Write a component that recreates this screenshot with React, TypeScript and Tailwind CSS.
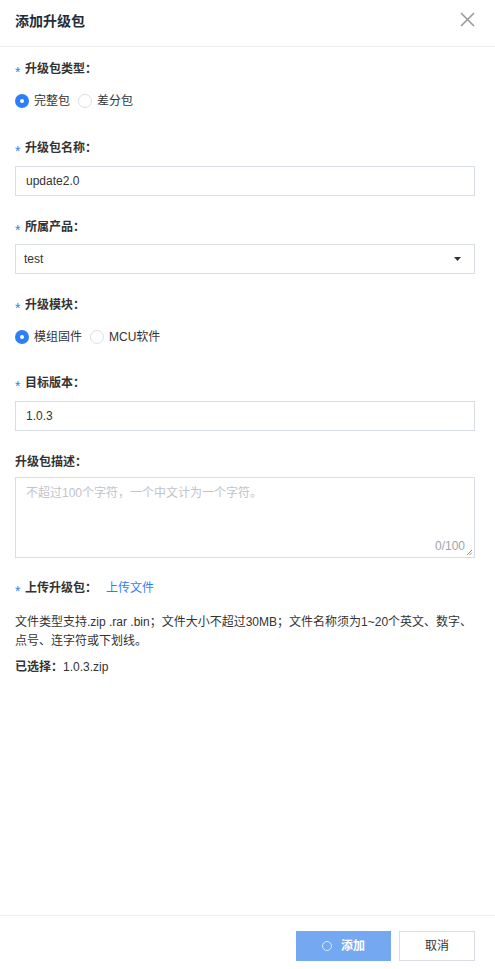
import { useState } from 'react';

const FONT = '"Liberation Sans", "Noto Sans CJK SC", Arial, sans-serif';

function Label({ text, required = true }: { text: string; required?: boolean }) {
  return (
    <div className="flex h-[18px] items-center text-[12px] font-bold leading-[18px] text-[#333]">
      {required && (
        <span className="mr-[4px] w-[6px] translate-y-[3px] text-[14px] font-normal leading-none text-[#2d7ff9]">*</span>
      )}
      <span>{text}</span>
    </div>
  );
}

function Radio({ checked, label }: { checked: boolean; label: string }) {
  return (
    <label className="mr-[8px] flex items-center text-[12px] text-[#333]">
      {checked ? (
        <span className="flex h-[14px] w-[14px] items-center justify-center rounded-full bg-[#2d7ff9]">
          <span className="h-[4px] w-[4px] rounded-full bg-white" />
        </span>
      ) : (
        <span className="h-[14px] w-[14px] rounded-full border border-[#dcdfe6] bg-white" />
      )}
      <span className="ml-[5px]">{label}</span>
    </label>
  );
}

function TextInput({ value }: { value: string }) {
  return (
    <div className="flex h-[30px] items-center border border-[#d8dde6] bg-white px-[10px] text-[12px] text-[#333]">
      {value}
    </div>
  );
}

export default function App() {
  const [desc] = useState('');

  return (
    <div className="flex h-[969px] w-[495px] flex-col bg-white" style={{ fontFamily: FONT }}>
      {/* Header */}
      <div className="flex h-[47px] shrink-0 items-start justify-between border-b border-[#ebedf0] pl-[15px] pr-[20px] pt-[12px]">
        <h1 className="text-[14px] font-bold leading-[18px] text-[#1f2d3d]">添加升级包</h1>
        <svg width="15" height="15" viewBox="0 0 15 15">
          <path d="M1 1 L14 14 M14 1 L1 14" stroke="#9a9a9a" strokeWidth="1.6" />
        </svg>
      </div>

      {/* Form */}
      <div className="flex-1 pl-[15px] pr-[20px] pt-[13px]">
        <Label text="升级包类型：" />
        <div className="mt-[13px] flex h-[20px] items-center">
          <Radio checked label="完整包" />
          <Radio checked={false} label="差分包" />
        </div>

        <div className="mt-[28px]">
          <Label text="升级包名称：" />
          <div className="mt-[9px]">
            <TextInput value="update2.0" />
          </div>
        </div>

        <div className="mt-[22px]">
          <Label text="所属产品：" />
          <div className="mt-[8px] flex h-[30px] items-center justify-between border border-[#d8dde6] bg-white pl-[8px] pr-[13px] text-[12px] text-[#333]">
            <span>test</span>
            <svg width="7" height="4" viewBox="0 0 7 4">
              <path d="M0 0 H7 L3.5 4 Z" fill="#333" />
            </svg>
          </div>
        </div>

        <div className="mt-[22px]">
          <Label text="升级模块：" />
          <div className="mt-[13px] flex h-[20px] items-center">
            <Radio checked label="模组固件" />
            <Radio checked={false} label="MCU软件" />
          </div>
        </div>

        <div className="mt-[27px]">
          <Label text="目标版本：" />
          <div className="mt-[9px]">
            <TextInput value="1.0.3" />
          </div>
        </div>

        <div className="mt-[22px]">
          <Label text="升级包描述：" required={false} />
          <div className="relative mt-[6px] h-[81px] border border-[#d8dde6] bg-white px-[10px] pt-[6px] text-[12px]">
            <span className="text-[#c0c4cc]">{desc || '不超过100个字符，一个中文计为一个字符。'}</span>
            <span className="absolute bottom-[2px] right-[9px] text-[12px] text-[#a0a4ab]">0/100</span>
            <svg width="5" height="5" viewBox="0 0 5 5" className="absolute bottom-[2px] right-[2px]">
              <path d="M5 0 L0 5 M5 2.5 L2.5 5" stroke="#777" strokeWidth="0.8" />
            </svg>
          </div>
        </div>

        <div className="mt-[21px] flex items-center">
          <Label text="上传升级包：" />
          <span className="ml-[9px] text-[12px] leading-[18px] text-[#2d7ff9]">上传文件</span>
        </div>

        <p className="mt-[16px] text-[12px] leading-[19px] text-[#333]">
          文件类型支持.zip .rar .bin；文件大小不超过30MB；文件名称须为1~20个英文、数字、点号、连字符或下划线。
        </p>
        <p className="mt-[7px] text-[12px] leading-[19px] text-[#333]">
          <span className="font-bold">已选择：</span>1.0.3.zip
        </p>
      </div>

      {/* Footer */}
      <div className="flex shrink-0 justify-end gap-[8px] border-t border-[#ebedf0] pb-[8px] pr-[20px] pt-[15px]">
        <button className="flex h-[30px] w-[95px] items-center justify-center bg-[#74a9f2] text-[12px] font-bold text-white">
          <span className="mr-[9px] h-[10px] w-[10px] rounded-full border-[1.5px] border-[#dbe8fb]" />
          添加
        </button>
        <button className="h-[30px] w-[76px] border border-[#d8dde6] bg-white text-[12px] text-[#333]">取消</button>
      </div>
    </div>
  );
}
